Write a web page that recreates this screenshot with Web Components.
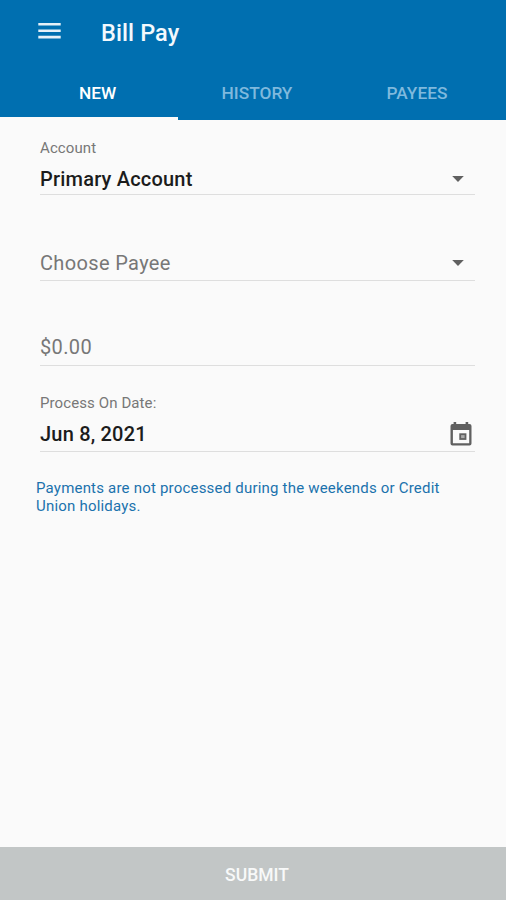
<!DOCTYPE html>
<html lang="en">
<head>
<meta charset="utf-8">
<title>Bill Pay</title>
<style>
html,body{margin:0;height:100%}
body{font-family:Roboto,"Liberation Sans",sans-serif;background:#fafafa;color:#1c1c1c}
</style>
</head>
<body>
<bill-pay-page></bill-pay-page>
<script>
const define=(name,html)=>customElements.define(name,class extends HTMLElement{
  constructor(){
    super();
    const t=document.createElement('template');
    t.innerHTML=html;
    this.attachShadow({mode:'open'}).append(t.content.cloneNode(true));
  }
});

define('menu-icon',`<style>:host{display:block;width:24px;height:18px}svg{display:block}</style>
<svg width="24" height="18" viewBox="0 0 24 18"><path d="M.3 1h22.400v2.600H.3zM.3 7.400h22.400V10H.3zM.3 13.800h22.400v2.600H.3z" fill="#e6f1f8"/></svg>`);

define('caret-icon',`<style>:host{display:block}svg{display:block}</style>
<svg width="12" height="6" viewBox="0 0 12 6"><path d="M.2 0h11.600L6 5.900z" fill="#606060"/></svg>`);

define('calendar-icon',`<style>:host{display:block}svg{display:block}</style>
<svg width="22" height="24" viewBox="0 0 22 24"><path fill="#606060" fill-rule="evenodd" d="M3.600 0h2.600v2h9.400V0h2.600v2h1.300A2 2 0 0 1 21.500 4v17.500a2 2 0 0 1-2 2H2.500a2 2 0 0 1-2-2V4a2 2 0 0 1 2-2h1.100zM2.900 8v13.200h16.300V8z"/><rect x="10.200" y="12.200" width="5.300" height="4.800" fill="#aaa" stroke="#606060" stroke-width="1.800"/></svg>`);

define('app-bar',`<style>
:host{display:flex;align-items:center;height:65px;padding-left:38px;box-sizing:border-box}
h1{margin:0 0 0 39px;font-size:23.500px;line-height:28px;font-weight:500;color:#f3f9fd;letter-spacing:.1px}
menu-icon{margin-top:-3px}
</style><menu-icon></menu-icon><h1><slot></slot></h1>`);

define('tab-item',`<style>
:host{display:flex;box-sizing:border-box;justify-content:center;padding-top:18px;font-size:17.300px;line-height:20px;font-weight:500;color:#7fb9dd;border-bottom:3px solid transparent}
:host([selected]){color:#fff;border-color:#fafafa}
</style><slot></slot>`);

define('tab-bar',`<style>:host{display:grid;grid-template-columns:178px 158px 1fr;height:55px}
::slotted(tab-item:first-child){padding-left:17px}
::slotted(tab-item:last-child){padding-right:8px}
</style><slot></slot>`);

define('form-field',`<style>
:host{display:flex;flex-direction:column;justify-content:flex-end;box-sizing:border-box;height:86px;border-bottom:1px solid #dedede;font-size:20px}
.label{font-size:15px;line-height:18px;color:#777;letter-spacing:.1px;margin-bottom:var(--label-gap,10px)}
.row{display:flex;justify-content:space-between;align-items:center;line-height:24px;height:24px;margin-bottom:var(--gap,4px)}
.value{white-space:nowrap;letter-spacing:.2px}
:host([placeholder]) .value{color:#777;letter-spacing:.35px}
:host([filled]) .value{font-weight:500}
</style><div class="label"><slot name="label"></slot></div><div class="row"><span class="value"><slot></slot></span><slot name="icon"></slot></div>`);

define('submit-bar',`<style>
:host{display:flex;align-items:center;justify-content:center;height:53px;background:#c2c6c6;color:#f8f9f9;font-size:17.500px;font-weight:500;padding:3px 0 0 8px;box-sizing:border-box}
</style><slot></slot>`);

define('bill-pay-page',`<style>
:host{display:flex;flex-direction:column;height:900px}
header{background:#006fb0;height:120px}
main{flex:1;padding:0 31px 0 40px}
.account{height:75px;--gap:3px}
.payee{--gap:5px}
.amount{height:85px;--gap:6px}
.date{--gap:5px}
caret-icon{margin-right:11px}
calendar-icon{margin-right:3px}
p{margin:27px 0 0 -4px;font-size:15px;line-height:18px;letter-spacing:.2px;color:#1b72ad;width:420px}
</style>
<header><app-bar>Bill Pay</app-bar>
<tab-bar><tab-item selected>NEW</tab-item><tab-item>HISTORY</tab-item><tab-item>PAYEES</tab-item></tab-bar></header>
<main>
<form-field class="account" filled><span slot="label">Account</span>Primary Account<caret-icon slot="icon"></caret-icon></form-field>
<form-field class="payee" placeholder>Choose Payee<caret-icon slot="icon"></caret-icon></form-field>
<form-field class="amount" placeholder>$0.00</form-field>
<form-field class="date" filled><span slot="label">Process On Date:</span>Jun 8, 2021<calendar-icon slot="icon"></calendar-icon></form-field>
<p>Payments are not processed during the weekends or Credit Union holidays.</p>
</main>
<submit-bar>SUBMIT</submit-bar>`);
</script>
</body>
</html>
